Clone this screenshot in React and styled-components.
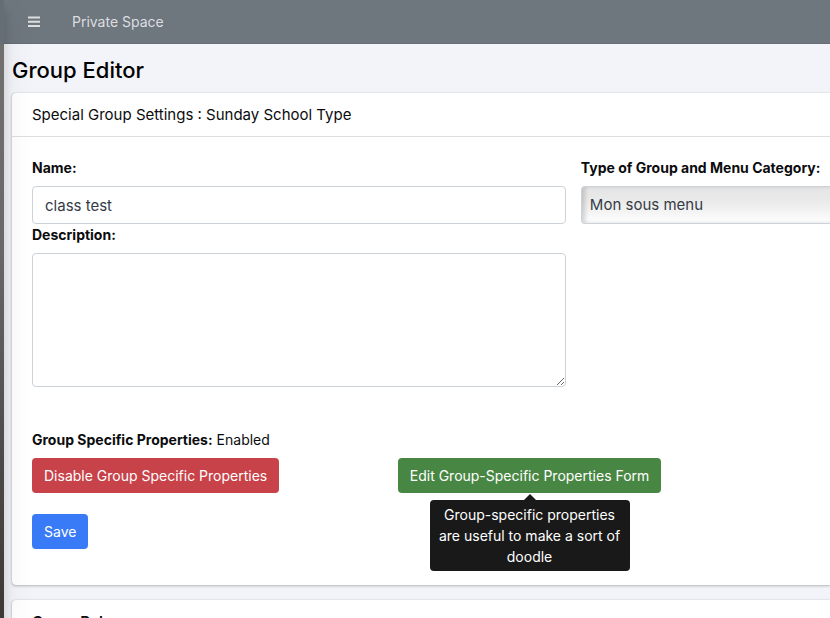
import React from "react";
import styled, { createGlobalStyle, css } from "styled-components";

const GlobalStyle = createGlobalStyle`
  *, *::before, *::after { box-sizing: border-box; }
  html, body, #root { height: 100%; }
  body {
    margin: 0;
    overflow: hidden;
    background: #f3f4f9;
    color: #0b0c0e;
    font: 400 14px/21px Inter, "Liberation Sans", sans-serif;
  }
`;

const Shell = styled.div`
  display: flex;
  height: 100%;
`;

const Sidebar = styled.aside`
  position: relative;
  z-index: 2;
  flex: 0 0 4px;
  background: linear-gradient(#656d75 0 44px, #72706e 45px, #6a6866 40%, #4c4a48 75%, #3d3835);
  box-shadow: 0 14px 28px rgba(0, 0, 0, 0.25), 0 10px 10px rgba(0, 0, 0, 0.22);
`;

const Content = styled.div`
  flex: 1;
  min-width: 0;
`;

const Navbar = styled.nav`
  display: flex;
  align-items: center;
  gap: 32px;
  height: 44px;
  padding-left: 24px;
  background: #6e767e;
  border-bottom: 1px solid #666e77;
`;

const MenuButton = styled.button`
  display: flex;
  padding: 0;
  border: 0;
  background: none;
  color: #dcdee0;
`;

const NavLink = styled.a`
  color: #dcdee0;
  text-decoration: none;
`;

const Main = styled.main`
  padding-left: 8px;
`;

const PageTitle = styled.h1`
  margin: 0;
  padding: 11px 0 7px;
  color: #000;
  font-size: 22px;
  font-weight: 500;
  line-height: 31px;
`;

const Card = styled.section`
  margin-bottom: 15px;
  border-radius: 4px 0 0 4px;
  background: #fff;
  box-shadow: 0 0 1px rgba(0, 0, 0, 0.25), 0 1px 3px rgba(0, 0, 0, 0.25);
`;

const CardHeader = styled.header`
  padding: 12px 20px 11px;
  border-bottom: 1px solid #dfdfdf;
`;

const CardTitle = styled.h2`
  margin: 0;
  font-size: 15px;
  font-weight: ${(p) => (p.$strong ? 600 : 400)};
  line-height: 20px;
`;

const CardBody = styled.form`
  padding: 20px 0 36px 20px;
`;

const FieldGrid = styled.div`
  display: grid;
  grid-template-columns: minmax(0, 15fr) minmax(0, 7fr);
  column-gap: 15px;
`;

const Field = styled.div`
  display: flex;
  flex-direction: column;
`;

const Label = styled.label`
  margin-bottom: 8px;
  font-weight: 700;
  white-space: nowrap;
`;

const control = css`
  width: 100%;
  border: 1px solid #cdd2d9;
  border-radius: 4px;
  background: #fff;
  color: #343b45;
  font: 400 15px/24px Inter, "Liberation Sans", sans-serif;
`;

const TextInput = styled.input`
  ${control}
  height: 38px;
  padding: 6px 12px;
`;

const TextArea = styled.textarea`
  ${control}
  display: block;
  height: 134px;
  padding: 6px 12px;
  resize: vertical;
`;

const Select = styled.select`
  ${control}
  height: 38px;
  padding: 6px 8px;
  border-right: 0;
  border-radius: 4px 0 0 4px;
  background: linear-gradient(#e5e5e5, #eaeaea 40%, #fbfbfb 90%);
  box-shadow: inset 4px 0 4px -1px rgba(0, 0, 0, 0.16);
  appearance: none;
`;

const Properties = styled.p`
  margin: 42px 0 8px;
`;

const Strong = styled.strong`
  font-weight: 700;
`;

const ActionGrid = styled.div`
  display: grid;
  grid-template-columns: minmax(0, 11fr) minmax(0, 13fr);
  margin-bottom: 21px;
`;

const tones = {
  danger: "#c84249",
  success: "#488743",
  primary: "#397bf6",
};

const Button = styled.button`
  height: 35px;
  padding: 0 12px;
  border: 0;
  border-radius: 4px;
  background: ${(p) => tones[p.$tone]};
  color: #fff;
  font: inherit;
  white-space: nowrap;
`;

const TooltipAnchor = styled.div`
  position: relative;
  display: inline-block;
`;

const Tooltip = styled.div`
  position: absolute;
  top: 100%;
  left: 50%;
  width: 200px;
  margin-top: 7px;
  padding: 4px 8px;
  border-radius: 4px;
  background: #191919;
  color: #fff;
  text-align: center;
  transform: translateX(-50%);

  &::before {
    content: "";
    position: absolute;
    bottom: 100%;
    left: 50%;
    border: 6px solid transparent;
    border-top-width: 0;
    border-bottom-color: #191919;
    transform: translateX(-50%);
  }
`;

function BarsIcon() {
  return (
    <svg width="12" height="12" viewBox="0 0 12 12" fill="currentColor" aria-hidden="true">
      <path d="M0 0.6h12v2H0zM0 4.8h12v2H0zM0 9h12v2H0z" />
    </svg>
  );
}

export default function App() {
  return (
    <>
      <GlobalStyle />
      <Shell>
        <Sidebar />
        <Content>
          <Navbar>
            <MenuButton type="button" aria-label="Menu">
              <BarsIcon />
            </MenuButton>
            <NavLink href="#">Private Space</NavLink>
          </Navbar>
          <Main>
            <PageTitle>Group Editor</PageTitle>
            <Card>
              <CardHeader>
                <CardTitle>Special Group Settings : Sunday School Type</CardTitle>
              </CardHeader>
              <CardBody onSubmit={(e) => e.preventDefault()}>
                <FieldGrid>
                  <Field>
                    <Label htmlFor="name">Name:</Label>
                    <TextInput id="name" defaultValue="class test" />
                  </Field>
                  <Field>
                    <Label htmlFor="category">Type of Group and Menu Category:</Label>
                    <Select id="category">
                      <option>Mon sous menu</option>
                    </Select>
                  </Field>
                  <Field>
                    <Label htmlFor="description">Description:</Label>
                    <TextArea id="description" />
                  </Field>
                </FieldGrid>
                <Properties>
                  <Strong>Group Specific Properties:</Strong> Enabled
                </Properties>
                <ActionGrid>
                  <div>
                    <Button type="button" $tone="danger">
                      Disable Group Specific Properties
                    </Button>
                  </div>
                  <div>
                    <TooltipAnchor>
                      <Button type="button" $tone="success" aria-describedby="form-tip">
                        Edit Group-Specific Properties Form
                      </Button>
                      <Tooltip id="form-tip" role="tooltip">
                        Group-specific properties are useful to make a sort of doodle
                      </Tooltip>
                    </TooltipAnchor>
                  </div>
                </ActionGrid>
                <Button type="submit" $tone="primary">
                  Save
                </Button>
              </CardBody>
            </Card>
            <Card>
              <CardHeader>
                <CardTitle $strong>Group Roles:</CardTitle>
              </CardHeader>
            </Card>
          </Main>
        </Content>
      </Shell>
    </>
  );
}
